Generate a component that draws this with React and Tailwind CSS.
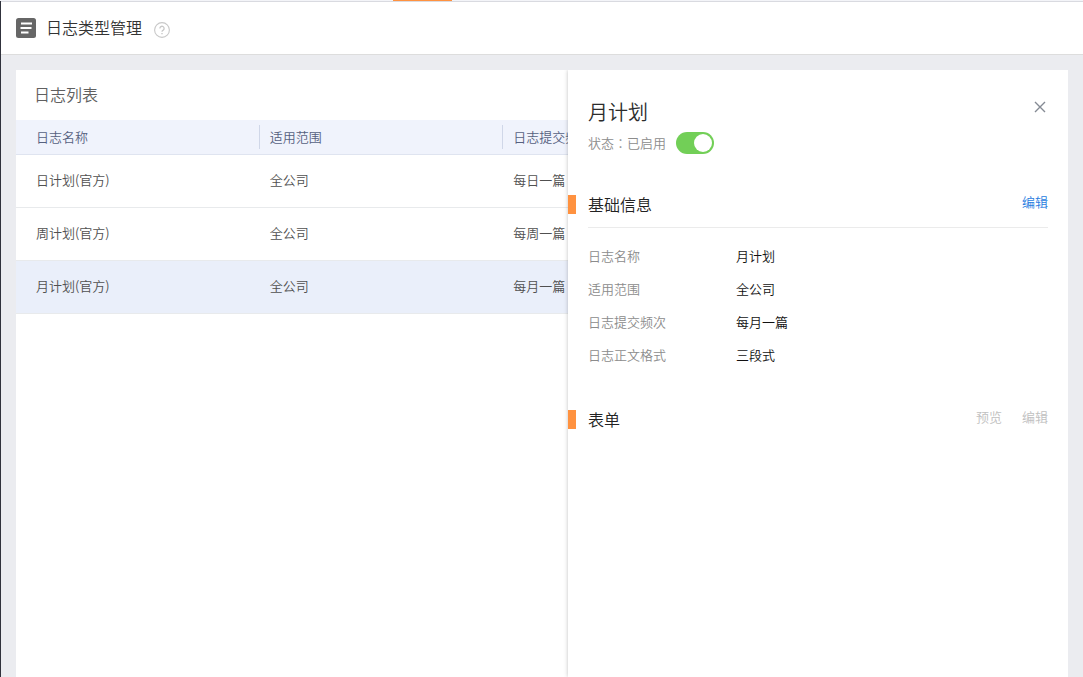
import { useState } from "react";

const columns = ["日志名称", "适用范围", "日志提交频次"];

const logs = [
  { name: "日计划(官方)", scope: "全公司", frequency: "每日一篇" },
  { name: "周计划(官方)", scope: "全公司", frequency: "每周一篇" },
  { name: "月计划(官方)", scope: "全公司", frequency: "每月一篇", selected: true },
];

const details = [
  ["日志名称", "月计划"],
  ["适用范围", "全公司"],
  ["日志提交频次", "每月一篇"],
  ["日志正文格式", "三段式"],
];

function LogIcon() {
  return (
    <svg className="size-5 shrink-0" viewBox="0 0 20 20" aria-hidden="true">
      <rect width="20" height="20" rx="2.5" fill="#666666" />
      <path d="M5 5.500h11M4.500 10H15.500M5 14.500h7.500" stroke="#ffffff" strokeWidth="2" fill="none" />
    </svg>
  );
}

function HelpIcon() {
  return (
    <svg className="size-4" viewBox="0 0 16 16" fill="none" stroke="#c8c8c8" aria-hidden="true">
      <circle cx="8" cy="8" r="7.4" strokeWidth="1.1" />
      <path d="M5.9 6.4a2.1 2.1 0 1 1 3.3 1.7C8.4 8.600 8 8.900 8 9.800" strokeWidth="1.3" />
      <path d="M8 10.900v1.300" strokeWidth="1.400" />
    </svg>
  );
}

function PageHeader() {
  return (
    <header className="flex h-[53px] shrink-0 items-center border-b border-[#dddddd] bg-white pl-[15px]">
      <LogIcon />
      <h1 className="ml-2.5 pb-0.5 text-base text-[#333333]">日志类型管理</h1>
      <button type="button" aria-label="帮助" className="ml-3 mt-1">
        <HelpIcon />
      </button>
    </header>
  );
}

function LogTable() {
  return (
    <section className="min-w-0 flex-1 overflow-hidden bg-white">
      <h2 className="flex h-[50px] items-center pb-0.5 pl-[18px] text-base text-[#606060]">日志列表</h2>
      <table className="w-[731px] table-fixed border-separate border-spacing-0 text-left text-[13px] leading-5">
        <thead className="bg-[#f0f3fc] text-[#56617f]">
          <tr className="h-[35px]">
            {columns.map((label, index) => (
              <th key={label} scope="col" className="border-b border-[#dfe4f0] p-0 font-[350]">
                <div
                  className={
                    index < columns.length - 1
                      ? "flex h-6 items-center border-r border-[#d0d7e8] pl-5"
                      : "flex h-6 items-center pl-5"
                  }
                >
                  <span className={index === 0 ? "" : "-ml-2.5"}>{label}</span>
                </div>
              </th>
            ))}
          </tr>
        </thead>
        <tbody className="text-[#505050]">
          {logs.map((log) => (
            <tr key={log.name} className={log.selected ? "h-[53px] bg-[#eaeffa]" : "h-[53px]"}>
              <td className="border-b border-[#e8eaec] p-0 pb-0.5 pl-5">{log.name}</td>
              <td className="border-b border-[#e8eaec] p-0 pb-0.5 pl-2.5">{log.scope}</td>
              <td className="border-b border-[#e8eaec] p-0 pb-0.5 pl-2.5">{log.frequency}</td>
            </tr>
          ))}
        </tbody>
      </table>
    </section>
  );
}

function SectionHeader({ title, children }) {
  return (
    <div className="flex h-[45px] items-center pr-5">
      <span className="h-[19px] w-2 bg-[#ff9240]" />
      <h3 className="ml-3 flex-1 pb-0.5 text-base text-[#222222]">{title}</h3>
      <div className="flex gap-5 pb-1.5 text-[13px] leading-5">{children}</div>
    </div>
  );
}

function DetailPanel() {
  const [enabled, setEnabled] = useState(true);
  return (
    <aside className="relative w-[500px] shrink-0 bg-white pt-[26px] shadow-[0_0_4px_rgba(0,0,0,0.25)] [clip-path:inset(0_0_0_-6px)]">
      <div className="flex items-start justify-between px-5">
        <h2 className="text-xl leading-8 text-[#2c2c2c]">月计划</h2>
        <button type="button" aria-label="关闭" className="flex h-[22px] w-4 items-center justify-center">
          <svg className="size-3" viewBox="0 0 12 12" fill="none" stroke="#858a94" strokeWidth="1.400" aria-hidden="true">
            <path d="M1 1l10 10M11 1L1 11" />
          </svg>
        </button>
      </div>
      <div className="mt-1 flex h-[22px] items-center px-5 text-[13px] text-[#8c8c8c]">
        <label htmlFor="log-enabled">
          状态<span className="font-['Noto_Sans_CJK_TC']" lang="zh-TW">：</span>
          {enabled ? "已启用" : "已停用"}
        </label>
        <input
          id="log-enabled"
          type="checkbox"
          role="switch"
          checked={enabled}
          onChange={(event) => setEnabled(event.target.checked)}
          className="ml-2.5 flex h-[22px] w-[38px] appearance-none items-center rounded-full bg-[#cccccc] px-0.5 before:size-[18px] before:rounded-full before:bg-white checked:justify-end checked:bg-[#72cf57]"
        />
      </div>

      <section className="mt-7">
        <SectionHeader title="基础信息">
          <a href="#edit-info" className="text-[#1f7ce0]">编辑</a>
        </SectionHeader>
        <hr className="mx-5 border-[#ebebeb]" />
        <dl className="px-5 pt-3 text-[13px]">
          {details.map(([label, value]) => (
            <div key={label} className="flex h-[33px] items-center pb-0.5">
              <dt className="w-[148px] text-[#8c8c8c]">{label}</dt>
              <dd className="text-[#111111]">{value}</dd>
            </div>
          ))}
        </dl>
      </section>

      <section className="mt-[25px]">
        <SectionHeader title="表单">
          <button type="button" disabled className="text-[#c0c0c0]">预览</button>
          <button type="button" disabled className="text-[#c0c0c0]">编辑</button>
        </SectionHeader>
      </section>
    </aside>
  );
}

export default function App() {
  return (
    <div
      lang="zh-CN"
      className="flex h-screen flex-col overflow-hidden bg-[#ebecf0] font-['Noto_Sans_CJK_SC',sans-serif] font-[350]"
    >
      <div className="flex h-px shrink-0 bg-[#f3f4f8]">
        <span className="ml-[393px] w-[59px] bg-[#ff9240]" />
      </div>
      <div className="flex min-h-0 flex-1 flex-col border-l border-[#30323c]">
        <div className="h-px shrink-0 bg-[#d9dae0]" />
        <PageHeader />
        <main className="flex min-h-0 flex-1 px-[15px] pt-[15px]">
          <LogTable />
          <DetailPanel />
        </main>
      </div>
    </div>
  );
}
